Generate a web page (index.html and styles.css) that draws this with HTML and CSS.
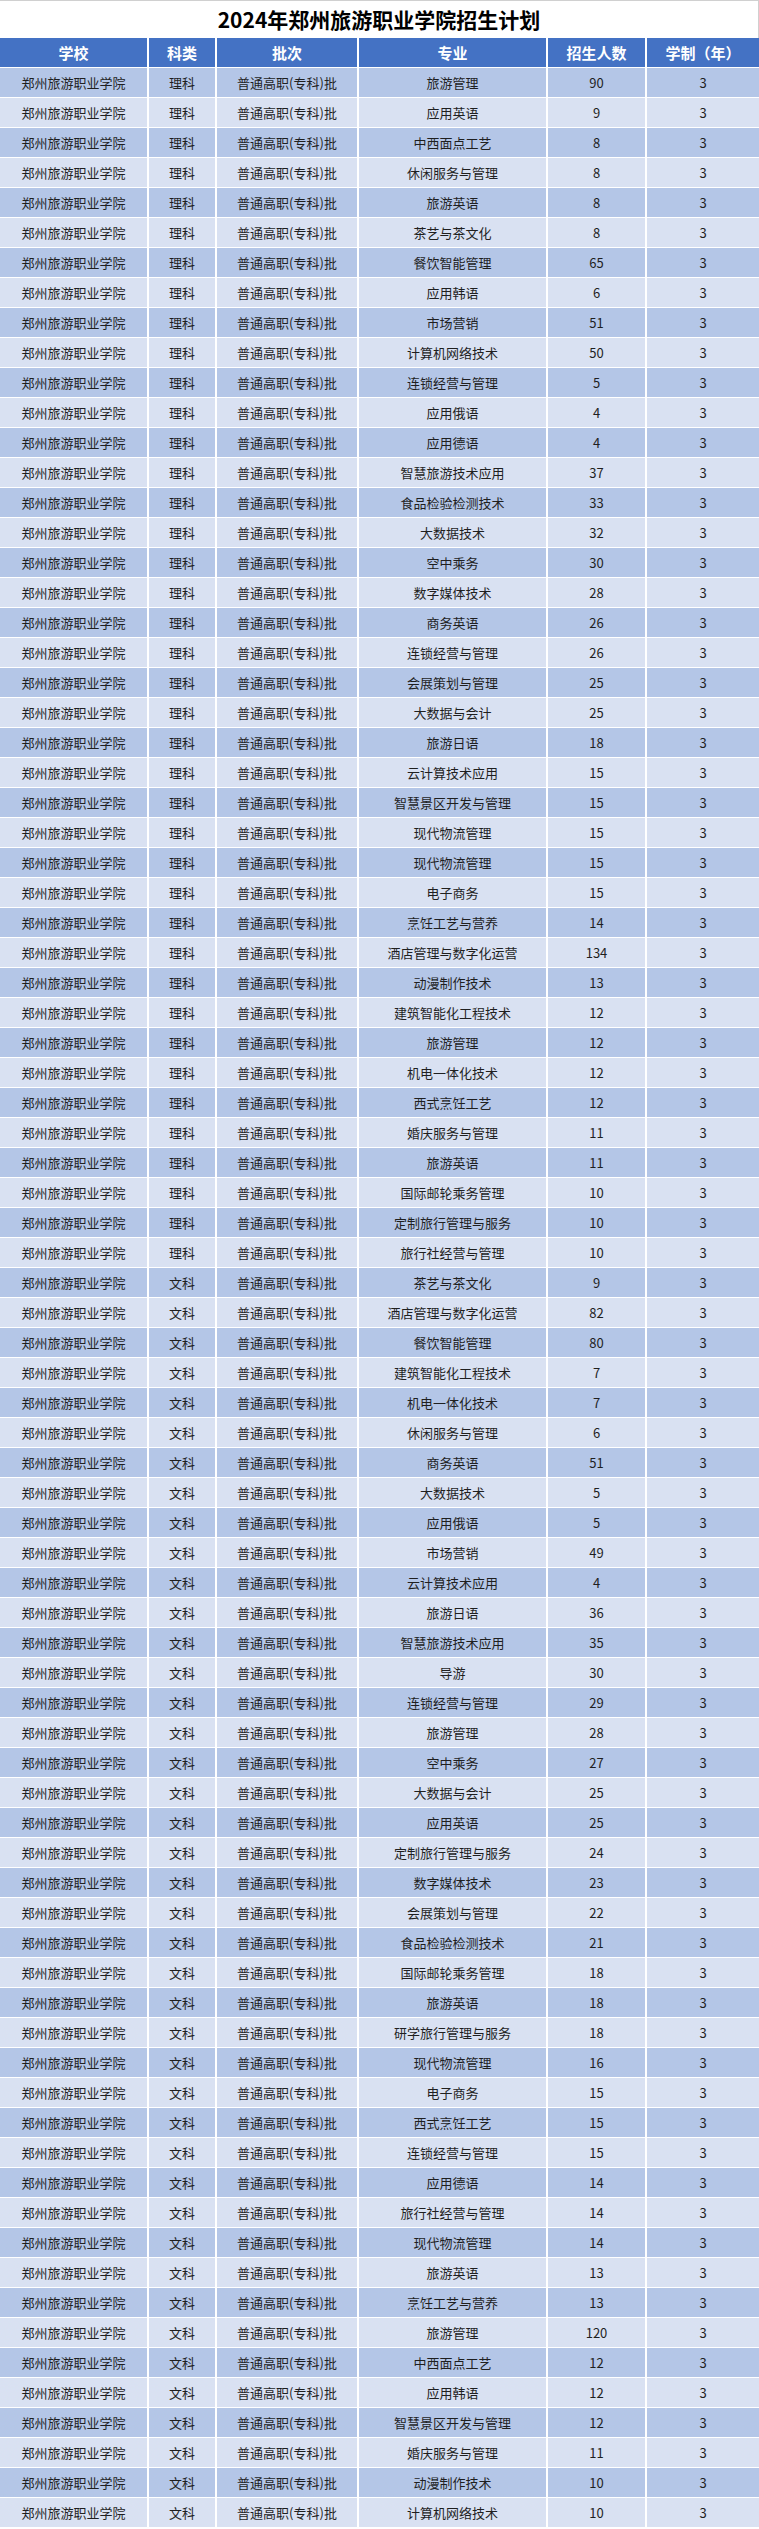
FILE: index.html
```html
<!DOCTYPE html>
<html lang="zh-CN">
<head>
<meta charset="utf-8">
<title>2024年郑州旅游职业学院招生计划</title>
<link rel="stylesheet" href="styles.css">
</head>
<body>
<div class="sheet">
<h1 class="title">2024年郑州旅游职业学院招生计划</h1>
<table class="plan">
<colgroup>
<col class="c-school"><col class="c-type"><col class="c-batch"><col class="c-major"><col class="c-num"><col class="c-years">
</colgroup>
<thead>
<tr><th>学校</th><th>科类</th><th>批次</th><th>专业</th><th>招生人数</th><th>学制（年）</th></tr>
</thead>
<tbody>
<tr><td>郑州旅游职业学院</td><td>理科</td><td>普通高职(专科)批</td><td>旅游管理</td><td>90</td><td>3</td></tr>
<tr><td>郑州旅游职业学院</td><td>理科</td><td>普通高职(专科)批</td><td>应用英语</td><td>9</td><td>3</td></tr>
<tr><td>郑州旅游职业学院</td><td>理科</td><td>普通高职(专科)批</td><td>中西面点工艺</td><td>8</td><td>3</td></tr>
<tr><td>郑州旅游职业学院</td><td>理科</td><td>普通高职(专科)批</td><td>休闲服务与管理</td><td>8</td><td>3</td></tr>
<tr><td>郑州旅游职业学院</td><td>理科</td><td>普通高职(专科)批</td><td>旅游英语</td><td>8</td><td>3</td></tr>
<tr><td>郑州旅游职业学院</td><td>理科</td><td>普通高职(专科)批</td><td>茶艺与茶文化</td><td>8</td><td>3</td></tr>
<tr><td>郑州旅游职业学院</td><td>理科</td><td>普通高职(专科)批</td><td>餐饮智能管理</td><td>65</td><td>3</td></tr>
<tr><td>郑州旅游职业学院</td><td>理科</td><td>普通高职(专科)批</td><td>应用韩语</td><td>6</td><td>3</td></tr>
<tr><td>郑州旅游职业学院</td><td>理科</td><td>普通高职(专科)批</td><td>市场营销</td><td>51</td><td>3</td></tr>
<tr><td>郑州旅游职业学院</td><td>理科</td><td>普通高职(专科)批</td><td>计算机网络技术</td><td>50</td><td>3</td></tr>
<tr><td>郑州旅游职业学院</td><td>理科</td><td>普通高职(专科)批</td><td>连锁经营与管理</td><td>5</td><td>3</td></tr>
<tr><td>郑州旅游职业学院</td><td>理科</td><td>普通高职(专科)批</td><td>应用俄语</td><td>4</td><td>3</td></tr>
<tr><td>郑州旅游职业学院</td><td>理科</td><td>普通高职(专科)批</td><td>应用德语</td><td>4</td><td>3</td></tr>
<tr><td>郑州旅游职业学院</td><td>理科</td><td>普通高职(专科)批</td><td>智慧旅游技术应用</td><td>37</td><td>3</td></tr>
<tr><td>郑州旅游职业学院</td><td>理科</td><td>普通高职(专科)批</td><td>食品检验检测技术</td><td>33</td><td>3</td></tr>
<tr><td>郑州旅游职业学院</td><td>理科</td><td>普通高职(专科)批</td><td>大数据技术</td><td>32</td><td>3</td></tr>
<tr><td>郑州旅游职业学院</td><td>理科</td><td>普通高职(专科)批</td><td>空中乘务</td><td>30</td><td>3</td></tr>
<tr><td>郑州旅游职业学院</td><td>理科</td><td>普通高职(专科)批</td><td>数字媒体技术</td><td>28</td><td>3</td></tr>
<tr><td>郑州旅游职业学院</td><td>理科</td><td>普通高职(专科)批</td><td>商务英语</td><td>26</td><td>3</td></tr>
<tr><td>郑州旅游职业学院</td><td>理科</td><td>普通高职(专科)批</td><td>连锁经营与管理</td><td>26</td><td>3</td></tr>
<tr><td>郑州旅游职业学院</td><td>理科</td><td>普通高职(专科)批</td><td>会展策划与管理</td><td>25</td><td>3</td></tr>
<tr><td>郑州旅游职业学院</td><td>理科</td><td>普通高职(专科)批</td><td>大数据与会计</td><td>25</td><td>3</td></tr>
<tr><td>郑州旅游职业学院</td><td>理科</td><td>普通高职(专科)批</td><td>旅游日语</td><td>18</td><td>3</td></tr>
<tr><td>郑州旅游职业学院</td><td>理科</td><td>普通高职(专科)批</td><td>云计算技术应用</td><td>15</td><td>3</td></tr>
<tr><td>郑州旅游职业学院</td><td>理科</td><td>普通高职(专科)批</td><td>智慧景区开发与管理</td><td>15</td><td>3</td></tr>
<tr><td>郑州旅游职业学院</td><td>理科</td><td>普通高职(专科)批</td><td>现代物流管理</td><td>15</td><td>3</td></tr>
<tr><td>郑州旅游职业学院</td><td>理科</td><td>普通高职(专科)批</td><td>现代物流管理</td><td>15</td><td>3</td></tr>
<tr><td>郑州旅游职业学院</td><td>理科</td><td>普通高职(专科)批</td><td>电子商务</td><td>15</td><td>3</td></tr>
<tr><td>郑州旅游职业学院</td><td>理科</td><td>普通高职(专科)批</td><td>烹饪工艺与营养</td><td>14</td><td>3</td></tr>
<tr><td>郑州旅游职业学院</td><td>理科</td><td>普通高职(专科)批</td><td>酒店管理与数字化运营</td><td>134</td><td>3</td></tr>
<tr><td>郑州旅游职业学院</td><td>理科</td><td>普通高职(专科)批</td><td>动漫制作技术</td><td>13</td><td>3</td></tr>
<tr><td>郑州旅游职业学院</td><td>理科</td><td>普通高职(专科)批</td><td>建筑智能化工程技术</td><td>12</td><td>3</td></tr>
<tr><td>郑州旅游职业学院</td><td>理科</td><td>普通高职(专科)批</td><td>旅游管理</td><td>12</td><td>3</td></tr>
<tr><td>郑州旅游职业学院</td><td>理科</td><td>普通高职(专科)批</td><td>机电一体化技术</td><td>12</td><td>3</td></tr>
<tr><td>郑州旅游职业学院</td><td>理科</td><td>普通高职(专科)批</td><td>西式烹饪工艺</td><td>12</td><td>3</td></tr>
<tr><td>郑州旅游职业学院</td><td>理科</td><td>普通高职(专科)批</td><td>婚庆服务与管理</td><td>11</td><td>3</td></tr>
<tr><td>郑州旅游职业学院</td><td>理科</td><td>普通高职(专科)批</td><td>旅游英语</td><td>11</td><td>3</td></tr>
<tr><td>郑州旅游职业学院</td><td>理科</td><td>普通高职(专科)批</td><td>国际邮轮乘务管理</td><td>10</td><td>3</td></tr>
<tr><td>郑州旅游职业学院</td><td>理科</td><td>普通高职(专科)批</td><td>定制旅行管理与服务</td><td>10</td><td>3</td></tr>
<tr><td>郑州旅游职业学院</td><td>理科</td><td>普通高职(专科)批</td><td>旅行社经营与管理</td><td>10</td><td>3</td></tr>
<tr><td>郑州旅游职业学院</td><td>文科</td><td>普通高职(专科)批</td><td>茶艺与茶文化</td><td>9</td><td>3</td></tr>
<tr><td>郑州旅游职业学院</td><td>文科</td><td>普通高职(专科)批</td><td>酒店管理与数字化运营</td><td>82</td><td>3</td></tr>
<tr><td>郑州旅游职业学院</td><td>文科</td><td>普通高职(专科)批</td><td>餐饮智能管理</td><td>80</td><td>3</td></tr>
<tr><td>郑州旅游职业学院</td><td>文科</td><td>普通高职(专科)批</td><td>建筑智能化工程技术</td><td>7</td><td>3</td></tr>
<tr><td>郑州旅游职业学院</td><td>文科</td><td>普通高职(专科)批</td><td>机电一体化技术</td><td>7</td><td>3</td></tr>
<tr><td>郑州旅游职业学院</td><td>文科</td><td>普通高职(专科)批</td><td>休闲服务与管理</td><td>6</td><td>3</td></tr>
<tr><td>郑州旅游职业学院</td><td>文科</td><td>普通高职(专科)批</td><td>商务英语</td><td>51</td><td>3</td></tr>
<tr><td>郑州旅游职业学院</td><td>文科</td><td>普通高职(专科)批</td><td>大数据技术</td><td>5</td><td>3</td></tr>
<tr><td>郑州旅游职业学院</td><td>文科</td><td>普通高职(专科)批</td><td>应用俄语</td><td>5</td><td>3</td></tr>
<tr><td>郑州旅游职业学院</td><td>文科</td><td>普通高职(专科)批</td><td>市场营销</td><td>49</td><td>3</td></tr>
<tr><td>郑州旅游职业学院</td><td>文科</td><td>普通高职(专科)批</td><td>云计算技术应用</td><td>4</td><td>3</td></tr>
<tr><td>郑州旅游职业学院</td><td>文科</td><td>普通高职(专科)批</td><td>旅游日语</td><td>36</td><td>3</td></tr>
<tr><td>郑州旅游职业学院</td><td>文科</td><td>普通高职(专科)批</td><td>智慧旅游技术应用</td><td>35</td><td>3</td></tr>
<tr><td>郑州旅游职业学院</td><td>文科</td><td>普通高职(专科)批</td><td>导游</td><td>30</td><td>3</td></tr>
<tr><td>郑州旅游职业学院</td><td>文科</td><td>普通高职(专科)批</td><td>连锁经营与管理</td><td>29</td><td>3</td></tr>
<tr><td>郑州旅游职业学院</td><td>文科</td><td>普通高职(专科)批</td><td>旅游管理</td><td>28</td><td>3</td></tr>
<tr><td>郑州旅游职业学院</td><td>文科</td><td>普通高职(专科)批</td><td>空中乘务</td><td>27</td><td>3</td></tr>
<tr><td>郑州旅游职业学院</td><td>文科</td><td>普通高职(专科)批</td><td>大数据与会计</td><td>25</td><td>3</td></tr>
<tr><td>郑州旅游职业学院</td><td>文科</td><td>普通高职(专科)批</td><td>应用英语</td><td>25</td><td>3</td></tr>
<tr><td>郑州旅游职业学院</td><td>文科</td><td>普通高职(专科)批</td><td>定制旅行管理与服务</td><td>24</td><td>3</td></tr>
<tr><td>郑州旅游职业学院</td><td>文科</td><td>普通高职(专科)批</td><td>数字媒体技术</td><td>23</td><td>3</td></tr>
<tr><td>郑州旅游职业学院</td><td>文科</td><td>普通高职(专科)批</td><td>会展策划与管理</td><td>22</td><td>3</td></tr>
<tr><td>郑州旅游职业学院</td><td>文科</td><td>普通高职(专科)批</td><td>食品检验检测技术</td><td>21</td><td>3</td></tr>
<tr><td>郑州旅游职业学院</td><td>文科</td><td>普通高职(专科)批</td><td>国际邮轮乘务管理</td><td>18</td><td>3</td></tr>
<tr><td>郑州旅游职业学院</td><td>文科</td><td>普通高职(专科)批</td><td>旅游英语</td><td>18</td><td>3</td></tr>
<tr><td>郑州旅游职业学院</td><td>文科</td><td>普通高职(专科)批</td><td>研学旅行管理与服务</td><td>18</td><td>3</td></tr>
<tr><td>郑州旅游职业学院</td><td>文科</td><td>普通高职(专科)批</td><td>现代物流管理</td><td>16</td><td>3</td></tr>
<tr><td>郑州旅游职业学院</td><td>文科</td><td>普通高职(专科)批</td><td>电子商务</td><td>15</td><td>3</td></tr>
<tr><td>郑州旅游职业学院</td><td>文科</td><td>普通高职(专科)批</td><td>西式烹饪工艺</td><td>15</td><td>3</td></tr>
<tr><td>郑州旅游职业学院</td><td>文科</td><td>普通高职(专科)批</td><td>连锁经营与管理</td><td>15</td><td>3</td></tr>
<tr><td>郑州旅游职业学院</td><td>文科</td><td>普通高职(专科)批</td><td>应用德语</td><td>14</td><td>3</td></tr>
<tr><td>郑州旅游职业学院</td><td>文科</td><td>普通高职(专科)批</td><td>旅行社经营与管理</td><td>14</td><td>3</td></tr>
<tr><td>郑州旅游职业学院</td><td>文科</td><td>普通高职(专科)批</td><td>现代物流管理</td><td>14</td><td>3</td></tr>
<tr><td>郑州旅游职业学院</td><td>文科</td><td>普通高职(专科)批</td><td>旅游英语</td><td>13</td><td>3</td></tr>
<tr><td>郑州旅游职业学院</td><td>文科</td><td>普通高职(专科)批</td><td>烹饪工艺与营养</td><td>13</td><td>3</td></tr>
<tr><td>郑州旅游职业学院</td><td>文科</td><td>普通高职(专科)批</td><td>旅游管理</td><td>120</td><td>3</td></tr>
<tr><td>郑州旅游职业学院</td><td>文科</td><td>普通高职(专科)批</td><td>中西面点工艺</td><td>12</td><td>3</td></tr>
<tr><td>郑州旅游职业学院</td><td>文科</td><td>普通高职(专科)批</td><td>应用韩语</td><td>12</td><td>3</td></tr>
<tr><td>郑州旅游职业学院</td><td>文科</td><td>普通高职(专科)批</td><td>智慧景区开发与管理</td><td>12</td><td>3</td></tr>
<tr><td>郑州旅游职业学院</td><td>文科</td><td>普通高职(专科)批</td><td>婚庆服务与管理</td><td>11</td><td>3</td></tr>
<tr><td>郑州旅游职业学院</td><td>文科</td><td>普通高职(专科)批</td><td>动漫制作技术</td><td>10</td><td>3</td></tr>
<tr><td>郑州旅游职业学院</td><td>文科</td><td>普通高职(专科)批</td><td>计算机网络技术</td><td>10</td><td>3</td></tr>
</tbody>
</table>
</div>
</body>
</html>
```
FILE: styles.css
```css
html, body {
  margin: 0;
  padding: 0;
  background: #ffffff;
}

.sheet {
  width: 759px;
  font-family: "Noto Sans CJK SC", "Noto Sans", sans-serif;
  color: #1f1f1f;
}

.title {
  margin: 0;
  height: 38px;
  line-height: 37px;
  font-size: 21px;
  font-weight: 700;
  text-align: center;
  color: #000000;
  border-top: 1px solid #d0d0d0;
  border-right: 1px solid #d0d0d0;
  box-sizing: border-box;
}

.plan {
  width: 759px;
  table-layout: fixed;
  border-collapse: separate;
  border-spacing: 0;
}

.c-school { width: 149px; }
.c-type { width: 68px; }
.c-batch { width: 142px; }
.c-major { width: 189px; }
.c-num { width: 99px; }
.c-years { width: 112px; }

.plan th,
.plan td {
  padding: 0;
  text-align: center;
  white-space: nowrap;
  border-right: 2px solid #ffffff;
  border-bottom: 1px solid #ffffff;
  box-sizing: border-box;
}

.plan th:last-child,
.plan td:last-child {
  border-right: 0;
}

.plan th {
  height: 30px;
  background: #4472c4;
  color: #ffffff;
  font-size: 15px;
  font-weight: 700;
}

.plan td {
  height: 30px;
  font-size: 13px;
  font-weight: 400;
}

.plan tbody tr:nth-child(odd) td {
  background: #b4c6e7;
}

.plan tbody tr:nth-child(even) td {
  background: #d9e1f2;
}
```
